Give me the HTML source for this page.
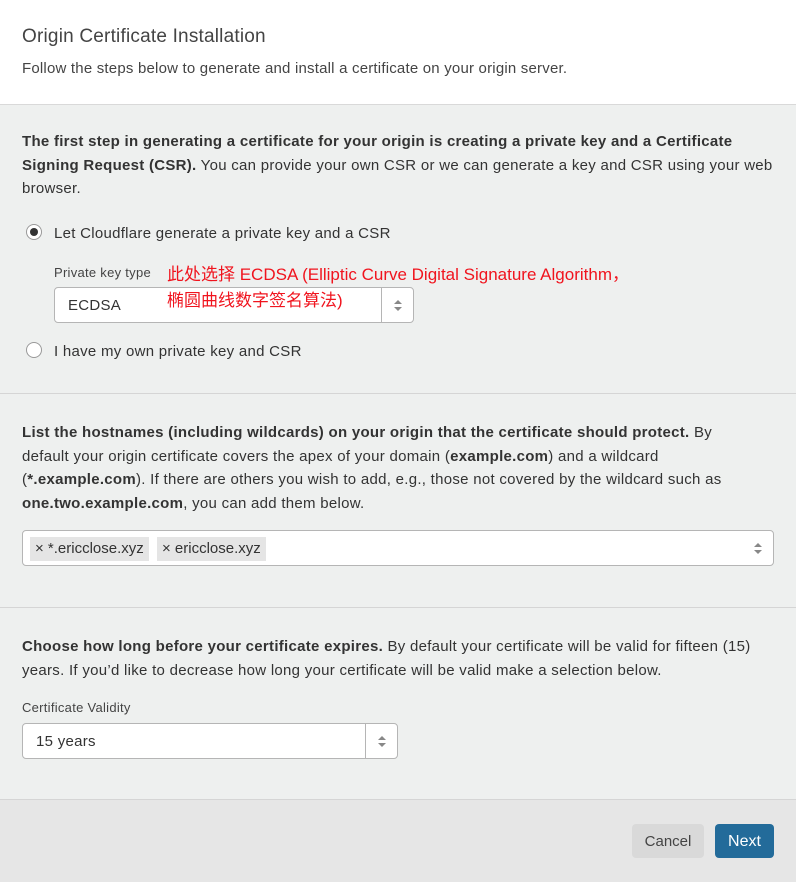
<!DOCTYPE html>
<html><head><meta charset="utf-8"><style>
body{margin:0;width:796px;height:882px;font-family:"Liberation Sans","Noto Sans CJK SC",sans-serif;color:#333;font-size:15px;overflow:hidden;background:#eef0ef}
.hdr{background:#fff;height:104px;border-bottom:1px solid #d9d9d9;position:relative}
.sec{border-bottom:1px solid #d5d5d5;position:relative}
p{margin:0;line-height:23.5px;white-space:nowrap;letter-spacing:0.28px}
.abs{position:absolute}
.radio{position:absolute;width:14px;height:14px;border:1px solid #999;border-radius:50%;background:#fff}
.radio.on::after{content:"";position:absolute;left:3px;top:3px;width:8px;height:8px;border-radius:50%;background:#333}
.box{position:absolute;background:#fff;border:1px solid #b5b5b5;border-radius:4px;box-sizing:border-box}
.arr{position:absolute;top:0;bottom:0;width:31px;border-left:1px solid #b5b5b5}
.arr::before,.arr::after{content:"";position:absolute;left:12px;border-left:4px solid transparent;border-right:4px solid transparent}
.arr::before{top:12px;border-bottom:4px solid #888}
.arr::after{top:19px;border-top:4px solid #888}
.tag{position:absolute;top:6px;height:24px;background:#e5e5e5;line-height:24px;padding:0 5px;font-size:15px}
.ls{letter-spacing:0.28px}
</style></head><body>
<div class="hdr">
<div class="abs" style="left:22px;top:26px;font-size:19px;color:#444;letter-spacing:0.2px">Origin Certificate Installation</div>
<div class="abs" style="left:22px;top:60px;font-size:15px;color:#444;letter-spacing:0.2px">Follow the steps below to generate and install a certificate on your origin server.</div>
</div>
<div class="sec" style="height:288px">
<p class="abs" style="left:22px;top:25px"><b>The first step in generating a certificate for your origin is creating a private key and a Certificate<br>Signing Request (CSR).</b> You can provide your own CSR or we can generate a key and CSR using your web<br>browser.</p>
<div class="radio on" style="left:26px;top:119px"></div>
<div class="abs ls" style="left:54px;top:120px">Let Cloudflare generate a private key and a CSR</div>
<div class="abs ls" style="left:54px;top:160px;font-size:13px;color:#444">Private key type</div>
<div class="box" style="left:54px;top:182px;width:360px;height:36px"><div class="abs ls" style="left:13px;top:9px">ECDSA</div><div class="arr" style="right:0"></div></div>
<div class="abs" style="left:167px;top:157px;color:#f0141e;font-size:17px;line-height:26px">此处选择 ECDSA (Elliptic Curve Digital Signature Algorithm，<br>椭圆曲线数字签名算法)</div>
<div class="radio" style="left:26px;top:237px"></div>
<div class="abs ls" style="left:54px;top:238px">I have my own private key and CSR</div>
</div>
<div class="sec" style="height:213px">
<p class="abs" style="left:22px;top:27px"><b>List the hostnames (including wildcards) on your origin that the certificate should protect.</b> By<br>default your origin certificate covers the apex of your domain (<b>example.com</b>) and a wildcard<br>(<b>*.example.com</b>). If there are others you wish to add, e.g., those not covered by the wildcard such as<br><b>one.two.example.com</b>, you can add them below.</p>
<div class="box" style="left:22px;top:136px;width:752px;height:36px">
<div class="tag" style="left:7px">× *.ericclose.xyz</div><div class="tag" style="left:134px">× ericclose.xyz</div>
<div class="arr" style="right:0;border-left:none"></div></div>
</div>
<div class="sec" style="height:191px">
<p class="abs" style="left:22px;top:27px"><b>Choose how long before your certificate expires.</b> By default your certificate will be valid for fifteen (15)<br>years. If you’d like to decrease how long your certificate will be valid make a selection below.</p>
<div class="abs ls" style="left:22px;top:92px;font-size:13px;color:#444">Certificate Validity</div>
<div class="box" style="left:22px;top:115px;width:376px;height:36px"><div class="abs ls" style="left:13px;top:9px">15 years</div><div class="arr" style="right:0"></div></div>
</div>
<div style="background:#e6e6e6;height:82px;position:relative">
<div class="abs" style="left:632px;top:24px;width:72px;height:34px;background:#d9d9d9;border-radius:4px;text-align:center;line-height:36px;color:#444">Cancel</div>
<div class="abs" style="left:715px;top:24px;width:59px;height:34px;background:#236b9a;border-radius:4px;text-align:center;line-height:36px;color:#fff;font-size:16px">Next</div>
</div>
</body></html>
